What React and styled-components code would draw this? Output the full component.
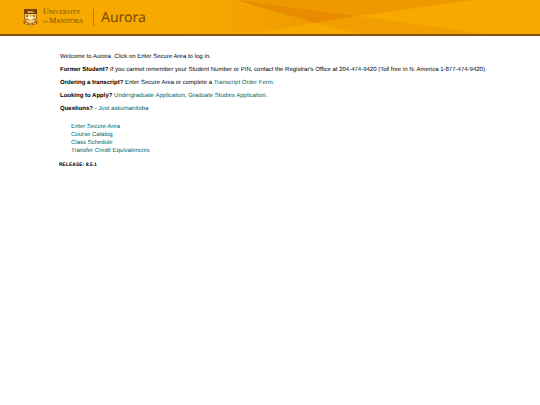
import React from "react";
import styled, { createGlobalStyle } from "styled-components";

const GlobalStyle = createGlobalStyle`
  body {
    margin: 0;
    background: #ffffff;
    color: #000000;
    font: 6px/7px "Liberation Sans", Arial, sans-serif;
    text-rendering: geometricPrecision;
  }
`;

const Header = styled.header`
  position: relative;
  display: flex;
  align-items: center;
  box-sizing: border-box;
  height: 36px;
  padding-left: 23px;
  border-bottom: 2px solid #84540f;
  background: #f7a900;
  color: #7b4a0c;
`;

const Rays = styled.svg`
  position: absolute;
  inset: 0;
  width: 100%;
  height: 100%;
`;

const Brand = styled.div`
  position: relative;
  display: flex;
  align-items: center;
`;

const Crest = styled.svg`
  width: 15px;
  height: 19px;
`;

const Wordmark = styled.div`
  margin-left: 5px;
  width: 42px;
  font: 6px/8px "Liberation Serif", "Times New Roman", serif;
  white-space: nowrap;
`;

const WordLine = styled.div`
  display: flex;
  align-items: baseline;
`;

const Initial = styled.span`
  font-size: 8px;
`;

const Small = styled.span`
  font-size: 4px;
  line-height: 4px;
  margin-right: 1px;
`;

const Title = styled.h1`
  margin: 0 0 0 8px;
  padding-left: 7px;
  border-left: 1px solid #bc7b08;
  font: 400 14px/17px "Noto Sans", sans-serif;
`;

const Main = styled.main`
  padding: 18px 24px 0 60px;
`;

const Notices = styled.div`
  display: grid;
  gap: 6px;
`;

const Notice = styled.p`
  margin: 0;
`;

const Link = styled.a`
  color: #005f66;
  text-decoration: none;
`;

const Menu = styled.ul`
  list-style: none;
  margin: 10px 0 0 11px;
  padding: 0;
  line-height: 8px;
`;

const MenuItem = styled.li`
  height: 8px;
`;

const Release = styled.footer`
  padding: 7px 0 0 59px;
  font-size: 5px;
  line-height: 6px;
  font-weight: 700;
`;

const links = ["Enter Secure Area", "Course Catalog", "Class Schedule", "Transfer Credit Equivalencies"];

function CrestIcon() {
  return (
    <Crest viewBox="0 0 15 19" aria-hidden="true">
      <path d="M1 1h13v9c0 4-3 6-6.500 7C4 16 1 14 1 10z" fill="#a66a12" />
      <path d="M2 6h11v4c0 3-2 5-5.500 6C4 15 2 13 2 10z" fill="#f0c76d" />
      <path d="M1 1h13v5H1z" fill="#784207" />
      <path d="M4 5l1-2h4l2 1v1z" fill="#dca02c" />
      <path d="M2 11h11v1H2zM3 7h2v2H3zM10 7h2v2h-2z" fill="#b57b28" />
      <path d="M5 8l2.500 1L10 8v3l-2.500 1L5 11z" fill="#fff0c8" />
      <path d="M0 13l3 1 4.500 2 4.500-2 3-1-1 3-4 1-2.500 1L5 17l-4-1z" fill="#97600f" />
      <path d="M2 15l3 1M13 15l-3 1M6 17h3" stroke="#ecc467" strokeWidth="1" />
    </Crest>
  );
}

export default function App() {
  return (
    <>
      <GlobalStyle />
      <Header>
        <Rays viewBox="0 0 540 34" preserveAspectRatio="none" aria-hidden="true">
          <defs>
            <linearGradient id="fade">
              <stop offset="0" stopColor="#f7a900" />
              <stop offset="1" stopColor="#f09b00" />
            </linearGradient>
          </defs>
          <path d="M180 0H235L316 23L250 34H180z" fill="url(#fade)" />
          <path d="M235 0H473L358 16z" fill="#ef9900" />
          <path d="M358 16L485 34H360L316 23z" fill="#f19e00" />
          <path d="M235 0L358 16L316 23z" fill="#e88b00" />
        </Rays>
        <Brand>
          <CrestIcon />
          <Wordmark>
            <WordLine><Initial>U</Initial>NIVERSITY</WordLine>
            <WordLine><Small>OF</Small><Initial>M</Initial>ANITOBA</WordLine>
          </Wordmark>
          <Title>Aurora</Title>
        </Brand>
      </Header>
      <Main>
        <Notices>
          <Notice>Welcome to Aurora. Click on Enter Secure Area to log in.</Notice>
          <Notice>
            <b>Former Student?</b> If you cannot remember your Student Number or PIN, contact the Registrar's Office at 204-474-9420 (Toll free in N. America 1-877-474-9420).
          </Notice>
          <Notice>
            <b>Ordering a transcript?</b> Enter Secure Area or complete a <Link href="#transcript">Transcript Order Form</Link>.
          </Notice>
          <Notice>
            <b>Looking to Apply?</b> <Link href="#undergraduate">Undergraduate Application</Link>, <Link href="#graduate">Graduate Studies Application</Link>.
          </Notice>
          <Notice>
            <b>Questions?</b> - <Link href="#questions">Just askumanitoba</Link>
          </Notice>
        </Notices>
        <nav aria-label="Aurora">
          <Menu>
            {links.map((label) => (
              <MenuItem key={label}>
                <Link href={"#" + label.toLowerCase().replaceAll(" ", "-")}>{label}</Link>
              </MenuItem>
            ))}
          </Menu>
        </nav>
      </Main>
      <Release>RELEASE: 8.5.1</Release>
    </>
  );
}
